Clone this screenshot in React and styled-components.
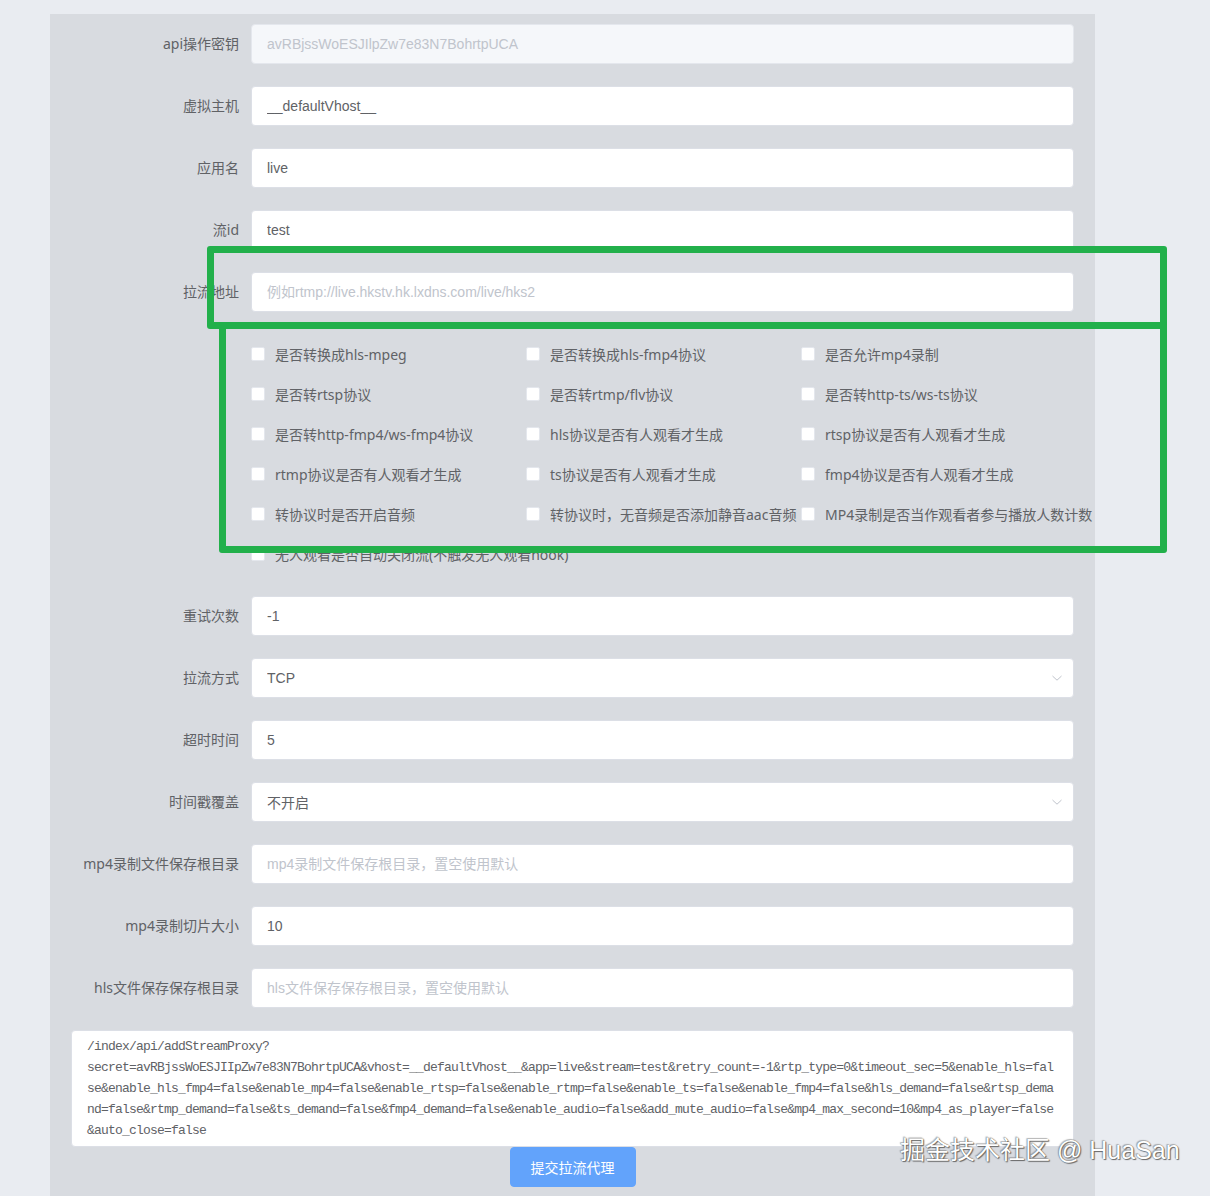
import React from "react";
import styled, { createGlobalStyle } from "styled-components";

const GlobalStyle = createGlobalStyle`
  html, body {
    margin: 0;
    padding: 0;
    background: #e9ecf1;
  }
  body {
    font-family: "Liberation Sans", "Noto Sans CJK SC", sans-serif;
    color: #606266;
  }
`;

const Page = styled.div`
  position: relative;
  min-height: 100vh;
  overflow: hidden;
`;

const Panel = styled.div`
  box-sizing: border-box;
  width: 1045px;
  margin: 14px 0 0 50px;
  padding: 10px 21px 14px;
  background: #d8dbe0;
`;

const FormItem = styled.div`
  display: flex;
  align-items: flex-start;
  margin-bottom: 22px;
`;

const Label = styled.label`
  box-sizing: border-box;
  flex: none;
  width: 180px;
  padding-right: 12px;
  text-align: right;
  line-height: 40px;
  font-family: "Noto Sans", "Noto Sans CJK SC", sans-serif;
  font-size: 14px;
  color: #606266;
  white-space: nowrap;
`;

const Field = styled.div`
  position: relative;
  flex: 1;
  min-width: 0;
`;

const Input = styled.input`
  box-sizing: border-box;
  display: block;
  width: 100%;
  height: 40px;
  padding: 0 ${(p) => (p.$select ? "30px" : "15px")} 0 15px;
  border: 1px solid ${(p) => (p.disabled ? "#e4e7ed" : "#dcdfe6")};
  border-radius: 4px;
  background: ${(p) => (p.disabled ? "#f5f7fa" : "#ffffff")};
  color: ${(p) => (p.disabled ? "#c0c4cc" : "#606266")};
  font-family: "Liberation Sans", "Noto Sans CJK SC", sans-serif;
  font-size: 14px;
  outline: none;
  cursor: ${(p) => (p.$select ? "pointer" : "text")};

  &::placeholder {
    color: #c0c4cc;
  }
`;

const Arrow = styled.svg`
  position: absolute;
  right: 11px;
  top: 14px;
  width: 12px;
  height: 12px;
  pointer-events: none;
`;

const CheckGrid = styled.div`
  display: grid;
  grid-template-columns: repeat(3, 275px);
  grid-auto-rows: 40px;
  margin: 0 0 22px 180px;
`;

const CheckItem = styled.label`
  display: flex;
  align-items: center;
  gap: 10px;
  white-space: nowrap;
  font-family: "Noto Sans", "Noto Sans CJK SC", sans-serif;
  font-size: 14px;
  color: #606266;
  cursor: pointer;
`;

const Box = styled.span`
  box-sizing: border-box;
  flex: none;
  width: 14px;
  height: 14px;
  border: 1px solid #e4e7ed;
  border-radius: 2px;
  background: #ffffff;
`;

const ApiText = styled.textarea`
  box-sizing: border-box;
  display: block;
  width: 100%;
  height: 117px;
  margin: 0;
  padding: 5px 15px;
  border: 1px solid #dcdfe6;
  border-radius: 4px;
  background: #ffffff;
  color: #606266;
  font-family: "Liberation Mono", monospace;
  font-size: 13px;
  letter-spacing: -0.8px;
  line-height: 21px;
  white-space: pre;
  overflow: hidden;
  resize: none;
  outline: none;
`;

const SubmitButton = styled.button`
  display: block;
  box-sizing: border-box;
  height: 40px;
  margin: 0 auto;
  padding: 0 20px;
  border: 1px solid #62a3fb;
  border-radius: 4px;
  background: #62a3fb;
  color: #ffffff;
  font-family: "Liberation Sans", "Noto Sans CJK SC", sans-serif;
  font-size: 14px;
  cursor: pointer;
`;

/* green call-out frames drawn over the form */
const Frame = styled.div`
  position: absolute;
  box-sizing: border-box;
  border: 7px solid #22b04b;
  border-radius: 3px;
  pointer-events: none;
`;

const Watermark = styled.div`
  position: absolute;
  left: 900px;
  top: 1134px;
  font-family: "Liberation Sans", "Noto Sans CJK SC", sans-serif;
  font-size: 25px;
  line-height: 32px;
  color: #ffffff;
  white-space: nowrap;
  text-shadow: 0 0 1px #4a4a4a, 1px 1px 1px #6a6a6a, -1px -1px 1px rgba(80, 80, 80, 0.35);
  pointer-events: none;
`;

const textFields = [
  { label: "api操作密钥", value: "avRBjssWoESJIlpZw7e83N7BohrtpUCA", disabled: true },
  { label: "虚拟主机", value: "__defaultVhost__" },
  { label: "应用名", value: "live" },
  { label: "流id", value: "test" },
  { label: "拉流地址", placeholder: "例如rtmp://live.hkstv.hk.lxdns.com/live/hks2" },
];

const checks = [
  "是否转换成hls-mpeg",
  "是否转换成hls-fmp4协议",
  "是否允许mp4录制",
  "是否转rtsp协议",
  "是否转rtmp/flv协议",
  "是否转http-ts/ws-ts协议",
  "是否转http-fmp4/ws-fmp4协议",
  "hls协议是否有人观看才生成",
  "rtsp协议是否有人观看才生成",
  "rtmp协议是否有人观看才生成",
  "ts协议是否有人观看才生成",
  "fmp4协议是否有人观看才生成",
  "转协议时是否开启音频",
  "转协议时，无音频是否添加静音aac音频",
  "MP4录制是否当作观看者参与播放人数计数",
  "无人观看是否自动关闭流(不触发无人观看hook)",
];

const moreFields = [
  { label: "重试次数", value: "-1" },
  { label: "拉流方式", value: "TCP", select: true },
  { label: "超时时间", value: "5" },
  { label: "时间戳覆盖", value: "不开启", select: true },
  { label: "mp4录制文件保存根目录", placeholder: "mp4录制文件保存根目录，置空使用默认" },
  { label: "mp4录制切片大小", value: "10" },
  { label: "hls文件保存保存根目录", placeholder: "hls文件保存保存根目录，置空使用默认" },
];

const apiUrl = [
  "/index/api/addStreamProxy?",
  "secret=avRBjssWoESJIIpZw7e83N7BohrtpUCA&vhost=__defaultVhost__&app=live&stream=test&retry_count=-1&rtp_type=0&timeout_sec=5&enable_hls=fal",
  "se&enable_hls_fmp4=false&enable_mp4=false&enable_rtsp=false&enable_rtmp=false&enable_ts=false&enable_fmp4=false&hls_demand=false&rtsp_dema",
  "nd=false&rtmp_demand=false&ts_demand=false&fmp4_demand=false&enable_audio=false&add_mute_audio=false&mp4_max_second=10&mp4_as_player=false",
  "&auto_close=false",
].join("\n");

function Row({ label, value, placeholder, disabled, select }) {
  return (
    <FormItem>
      <Label>{label}</Label>
      <Field>
        <Input
          readOnly
          value={value || ""}
          placeholder={placeholder}
          disabled={disabled}
          $select={select}
        />
        {select && (
          <Arrow viewBox="0 0 12 12">
            <path d="M1.5 4 L6 8.2 L10.5 4" fill="none" stroke="#c0c4cc" strokeWidth="1" />
          </Arrow>
        )}
      </Field>
    </FormItem>
  );
}

export default function App() {
  return (
    <Page>
      <GlobalStyle />
      <Panel>
        {textFields.map((f) => (
          <Row key={f.label} {...f} />
        ))}
        <CheckGrid>
          {checks.map((c) => (
            <CheckItem key={c}>
              <Box />
              {c}
            </CheckItem>
          ))}
        </CheckGrid>
        {moreFields.map((f) => (
          <Row key={f.label} {...f} />
        ))}
        <ApiText readOnly wrap="off" value={apiUrl} />
        <SubmitButton>提交拉流代理</SubmitButton>
      </Panel>
      <Frame style={{ left: 207, top: 246, width: 960, height: 83 }} />
      <Frame style={{ left: 219, top: 322, width: 948, height: 231 }} />
      <Watermark>掘金技术社区 @ HuaSan</Watermark>
    </Page>
  );
}
